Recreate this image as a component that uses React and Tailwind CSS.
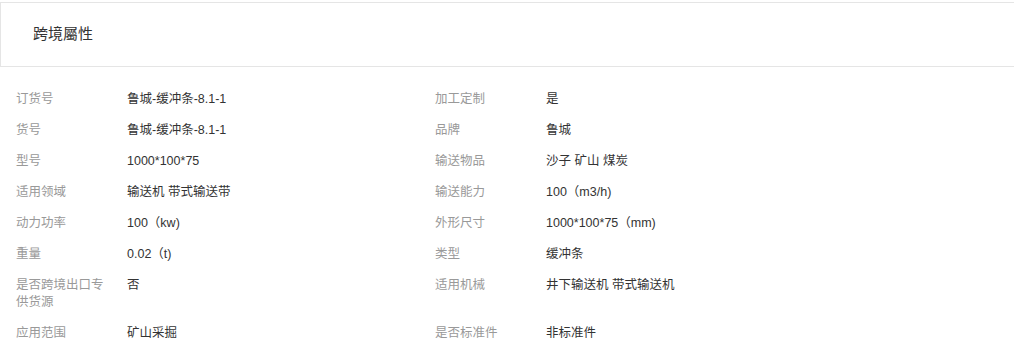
import React from 'react';

const leftRows = [
  ['订货号', '鲁城-缓冲条-8.1-1'],
  ['货号', '鲁城-缓冲条-8.1-1'],
  ['型号', '1000*100*75'],
  ['适用领域', '输送机 带式输送带'],
  ['动力功率', '100（kw)'],
  ['重量', '0.02（t)'],
  ['是否跨境出口专供货源', '否'],
  ['应用范围', '矿山采掘'],
];

const rightRows = [
  ['加工定制', '是'],
  ['品牌', '鲁城'],
  ['输送物品', '沙子 矿山 煤炭'],
  ['输送能力', '100（m3/h)'],
  ['外形尺寸', '1000*100*75（mm)'],
  ['类型', '缓冲条'],
  ['适用机械', '井下输送机 带式输送机'],
  ['是否标准件', '非标准件'],
];

const Cell = ({ label, value }) => (
  <div className="flex py-[7px] pl-4 text-[12.5px] leading-[17px]">
    <div className="w-[90px] shrink-0 text-[#999]">{label}</div>
    <div className="pl-[21px] text-[#333]">{value}</div>
  </div>
);

export default function App() {
  return (
    <div
      className="w-[1014px] bg-white pt-[2px]"
      style={{ fontFamily: '"Liberation Sans", "Noto Sans CJK SC", sans-serif' }}
    >
      <div className="flex h-[65px] items-center border-y border-l border-[#e5e5e5] pl-8 text-[15px] text-[#333]">
        跨境屬性
      </div>
      <div className="grid grid-cols-[419px_1fr] pt-[17px]">
        {leftRows.map((row, i) => (
          <React.Fragment key={row[0]}>
            <Cell label={row[0]} value={row[1]} />
            <Cell label={rightRows[i][0]} value={rightRows[i][1]} />
          </React.Fragment>
        ))}
      </div>
    </div>
  );
}
